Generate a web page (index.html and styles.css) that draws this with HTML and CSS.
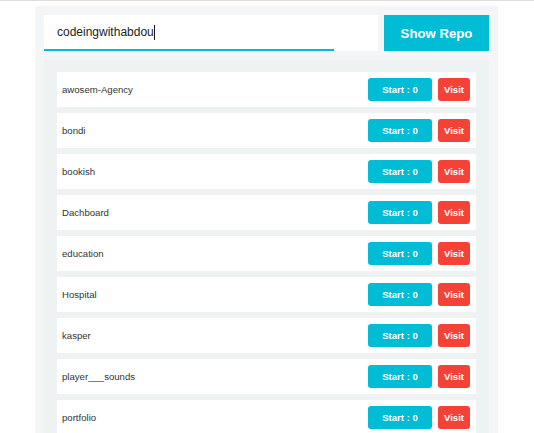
FILE: index.html
```html
<!DOCTYPE html>
<html>
<head>
<meta charset="utf-8">
<link rel="stylesheet" href="styles.css">
</head>
<body>
<div class="app">
  <div class="search">
    <div class="field">
      <div class="input"><span class="value">codeingwithabdou</span><span class="caret"></span></div>
    </div>
    <button class="show-btn">Show Repo</button>
  </div>
  <div class="list">
    <div class="row"><span class="name">awosem-Agency</span><span class="actions"><span class="btn start">Start : 0</span><span class="btn visit">Visit</span></span></div>
    <div class="row"><span class="name">bondi</span><span class="actions"><span class="btn start">Start : 0</span><span class="btn visit">Visit</span></span></div>
    <div class="row"><span class="name">bookish</span><span class="actions"><span class="btn start">Start : 0</span><span class="btn visit">Visit</span></span></div>
    <div class="row"><span class="name">Dachboard</span><span class="actions"><span class="btn start">Start : 0</span><span class="btn visit">Visit</span></span></div>
    <div class="row"><span class="name">education</span><span class="actions"><span class="btn start">Start : 0</span><span class="btn visit">Visit</span></span></div>
    <div class="row"><span class="name">Hospital</span><span class="actions"><span class="btn start">Start : 0</span><span class="btn visit">Visit</span></span></div>
    <div class="row"><span class="name">kasper</span><span class="actions"><span class="btn start">Start : 0</span><span class="btn visit">Visit</span></span></div>
    <div class="row"><span class="name">player___sounds</span><span class="actions"><span class="btn start">Start : 0</span><span class="btn visit">Visit</span></span></div>
    <div class="row"><span class="name">portfolio</span><span class="actions"><span class="btn start">Start : 0</span><span class="btn visit">Visit</span></span></div>
  </div>
</div>
</body>
</html>
```
FILE: styles.css
```css
html, body {
  margin: 0;
  padding: 0;
  background: #ffffff;
}
body {
  border-top: 1px solid #dedede;
  font-family: "Liberation Sans", Arial, sans-serif;
  overflow: hidden;
}
.app {
  width: 463px;
  box-sizing: border-box;
  margin: 5px 0 0 35px;
  padding: 9px 9px 9px 9px;
  background: #f3f5f6;
}
.search {
  display: flex;
  gap: 6px;
  height: 36px;
}
.field {
  flex: 1;
  background: #ffffff;
}
.input {
  width: 290px;
  height: 100%;
  box-sizing: border-box;
  border-bottom: 2px solid #00bcd4;
  padding-left: 13px;
  display: flex;
  align-items: center;
  font-size: 12px;
  color: #222;
}
.caret {
  display: inline-block;
  width: 1px;
  height: 15px;
  background: #1a1a2e;
}
.show-btn {
  width: 105px;
  border: none;
  background: #00bcd4;
  color: #ffffff;
  font-family: "Liberation Sans", Arial, sans-serif;
  font-weight: bold;
  font-size: 13.2px;
  padding: 0;
}
.list {
  margin-top: 9px;
  padding: 12px 13px;
  background: #eff2f3;
  display: flex;
  flex-direction: column;
  gap: 6px;
}
.row {
  height: 35px;
  background: #ffffff;
  display: flex;
  align-items: center;
  justify-content: space-between;
  padding: 0 6px 0 5px;
}
.name {
  font-size: 9.6px;
  color: #333;
}
.actions {
  display: flex;
  gap: 6px;
}
.btn {
  height: 23px;
  display: flex;
  align-items: center;
  justify-content: center;
  color: #fff;
  font-weight: bold;
  font-size: 9.6px;
  border-radius: 3px;
}
.start {
  width: 64px;
  background: #00bcd4;
}
.visit {
  width: 32px;
  background: #f44336;
}
```
